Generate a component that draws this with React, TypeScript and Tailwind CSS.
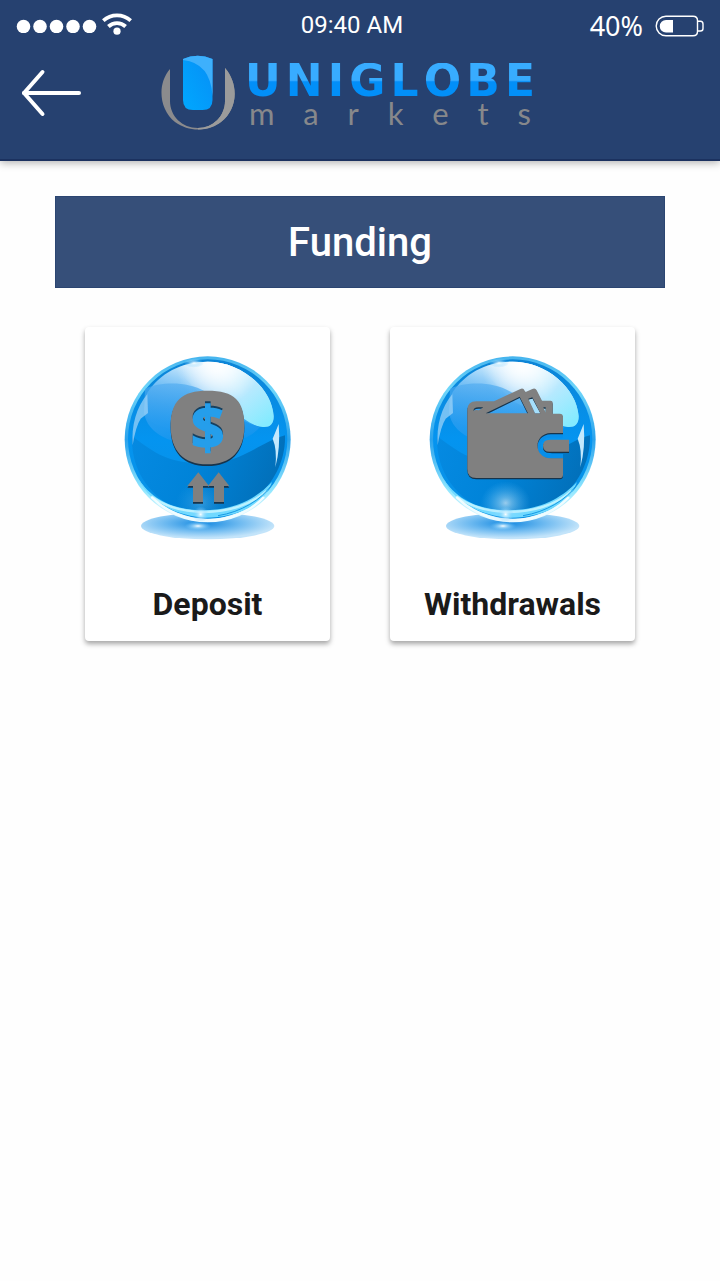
import { ReactNode, useId } from 'react'
import clsx from 'clsx'

interface FundingOption {
  href: string
  label: string
  icon: ReactNode
}

function StatusBar() {
  return (
    <div className="grid grid-cols-[1fr_auto_1fr] items-center h-[52px] px-4 text-white">
      <div className="flex items-center gap-1">
        <svg viewBox="0 0 82 14" className="w-[82px] h-[14px]" fill="#fff" aria-hidden="true">
          {[7.5, 24, 40.5, 57, 73.5].map((cx) => (
            <circle key={cx} cx={cx} cy="7.500" r="6.8" />
          ))}
        </svg>
        <svg viewBox="0 0 30 22" className="w-[30px] h-[22px] mb-1" fill="none" stroke="#fff" strokeWidth="3.8" aria-hidden="true">
          <path d="M1.3 7.6A20.5 20.5 0 0 1 28.7 7.6" />
          <path d="M6.4 13.5A12.5 12.5 0 0 1 23.6 13.5" />
          <circle cx="15" cy="18.2" r="3.6" fill="#fff" stroke="none" />
        </svg>
      </div>
      <span className="pr-4 pb-[2px] text-[24px] leading-8 font-['Roboto',sans-serif]">09:40 AM</span>
      <div className="flex items-center justify-end gap-3">
        <span className="text-[27px] leading-8 font-['Noto_Sans',sans-serif]">40%</span>
        <svg viewBox="0 0 49 22" className="w-[49px] h-[22px]" fill="none" stroke="#fff" strokeWidth="1.4" aria-hidden="true">
          <path d="M11 1.2H38Q42.500 1.2 42.500 5.500V16.500Q42.500 20.800 38 20.800H11A9.800 9.800 0 0 1 11 1.200Z" />
          <path d="M42.500 6.200H45.500Q48 6.200 48 9V13.500Q48 16 45.500 16H42.500" />
          <path d="M18 5V17.500H11A6.250 6.250 0 0 1 11 5Z" fill="#fff" stroke="none" />
        </svg>
      </div>
    </div>
  )
}

// Sets a word with its letters spread over the full width
function SpreadWord({ word, className }: { word: string; className: string }) {
  return (
    <span className={clsx('flex justify-between', className)}>
      {word.split('').map((letter, i) => (
        <span key={i}>{letter}</span>
      ))}
    </span>
  )
}

function Logo() {
  return (
    <div className="flex items-end gap-2">
      <svg viewBox="0 0 76 76" className="w-[76px] h-[76px]" aria-hidden="true">
        <defs>
          <linearGradient id="logo-blue" x1="1" y1="0" x2="0" y2="1">
            <stop offset="0" stopColor="#078ef5" />
            <stop offset="1" stopColor="#00a8ff" />
          </linearGradient>
        </defs>
        <path d="M9 14C-4 29-2 54 14 67C28 77 46 77 60 67C77 54 78 29 64 13V46C64 61 52 73 37 73C21 73 9 61 9 46Z" fill="#8b8b8d" />
        <path d="M64 13V46C64 61 52 73 37 73V74.500C47 74.500 55 71 60 67C77 54 78 29 64 13Z" fill="#9b9b9b" />
        <path d="M22 4Q36.500 -2.500 51.500 4V45Q51.500 55 41.500 55H32Q22 55 22 45Z" fill="url(#logo-blue)" />
        <path d="M22 4Q36.500 -2.500 51.500 4V41Q49.500 8 22 5Z" fill="#3eb0fc" />
      </svg>
      <div className="flex flex-col w-[290px] pb-1">
        <SpreadWord
          word="UNIGLOBE"
          className="bg-linear-to-b from-[#38acff] from-48% to-[#028ff8] to-52% bg-clip-text text-transparent text-[44px] leading-9 font-bold font-['DejaVu_Sans',sans-serif]"
        />
        <SpreadWord
          word="markets"
          className="px-1 text-[#87888b] text-[31px] leading-7 font-['Lato',sans-serif]"
        />
      </div>
    </div>
  )
}

const SHINE_SHAPE =
  'M217 236C255 176 320 141 399 141C500 141 592 220 597 305C597 330 585 338 565 337C530 332 505 318 480 300C440 330 360 350 300 345C250 335 215 320 208 295C210 275 212 256 217 236Z'

// Glossy blue ball with its reflection; the pictogram goes in as children
function GlassSphere({ glow, children }: { glow: number; children: ReactNode }) {
  const id = useId()
  const ref = (name: string) => `url(#${id}${name})`

  return (
    <svg viewBox="130 115 540 570" className="w-[180px] h-[190px]" aria-hidden="true">
      <defs>
        <radialGradient id={`${id}floor`} cx="0.46" cy="0.4" r="0.55">
          <stop offset="0" stopColor="#1589e0" />
          <stop offset="0.5" stopColor="#6cb9f0" />
          <stop offset="1" stopColor="#c3e4fa" />
        </radialGradient>
        <linearGradient id={`${id}rim`} x1="0" y1="0" x2="0" y2="1">
          <stop offset="0" stopColor="#45b4ee" />
          <stop offset="0.2" stopColor="#6fd6fa" />
          <stop offset="0.5" stopColor="#2aa2ec" />
          <stop offset="0.8" stopColor="#8ee6ff" />
          <stop offset="1" stopColor="#f2fdff" />
        </linearGradient>
        <linearGradient id={`${id}body`} x1="0" y1="0" x2="0" y2="1">
          <stop offset="0" stopColor="#0c84d6" />
          <stop offset="0.5" stopColor="#0494f0" />
          <stop offset="1" stopColor="#0a90e2" />
        </linearGradient>
        <linearGradient id={`${id}lower`} x1="0" y1="0" x2="1" y2="0.2">
          <stop offset="0" stopColor="#058ae2" />
          <stop offset="0.5" stopColor="#0083d8" />
          <stop offset="1" stopColor="#0270ba" />
        </linearGradient>
        <linearGradient id={`${id}shine`} gradientUnits="userSpaceOnUse" x1="390" y1="140" x2="330" y2="345">
          <stop offset="0" stopColor="#eaf8ff" />
          <stop offset="0.35" stopColor="#93cef8" />
          <stop offset="0.75" stopColor="#41a6ef" />
          <stop offset="1" stopColor="#0f95ee" />
        </linearGradient>
        <linearGradient id={`${id}cyan`} gradientUnits="userSpaceOnUse" x1="430" y1="150" x2="570" y2="330">
          <stop offset="0" stopColor="#f6fcff" />
          <stop offset="0.5" stopColor="#b9e9fe" />
          <stop offset="1" stopColor="#84ebff" />
        </linearGradient>
        <radialGradient id={`${id}top`} gradientUnits="userSpaceOnUse" cx="430" cy="150" r="125">
          <stop offset="0" stopColor="#fff" stopOpacity="0.95" />
          <stop offset="1" stopColor="#fff" stopOpacity="0" />
        </radialGradient>
        <linearGradient id={`${id}sweep`} gradientUnits="userSpaceOnUse" x1="340" y1="240" x2="490" y2="200">
          <stop offset="0" stopColor="#fff" stopOpacity="0" />
          <stop offset="1" stopColor="#fff" />
        </linearGradient>
        <mask id={`${id}mask`}>
          <rect x="130" y="115" width="540" height="570" fill={ref('sweep')} />
        </mask>
        <linearGradient id={`${id}haze`} x1="0.4" y1="0" x2="0.6" y2="1">
          <stop offset="0" stopColor="#4daaf0" stopOpacity="0.65" />
          <stop offset="0.6" stopColor="#2a9df0" stopOpacity="0.8" />
          <stop offset="1" stopColor="#0c93ee" />
        </linearGradient>
        <radialGradient id={`${id}glow`}>
          <stop offset="0" stopColor="#fff" />
          <stop offset="0.25" stopColor="#d3f1ff" stopOpacity="0.7" />
          <stop offset="1" stopColor="#6ec8ff" stopOpacity="0" />
        </radialGradient>
      </defs>
      <ellipse cx="399" cy="634" rx="200" ry="40" fill={ref('floor')} />
      <ellipse cx="370" cy="634" rx="40" ry="14" fill={ref('glow')} />
      <circle cx="399" cy="374" r="249" fill={ref('rim')} />
      <circle cx="399" cy="373" r="239" fill={ref('body')} />
      {/* dark lower half */}
      <path d="M172 365C230 405 265 445 390 447C500 447 560 380 631 362C635 480 540 598 400 600C260 598 167 490 172 365Z" fill={ref('lower')} />
      {/* top highlight, cyan towards the right edge */}
      <path d={SHINE_SHAPE} fill={ref('shine')} />
      <path d="M300 160Q345 141 399 141C500 141 592 220 597 305C597 330 585 338 565 337C530 332 505 318 480 300L400 260Z" fill={ref('cyan')} mask={ref('mask')} />
      <path d={SHINE_SHAPE} fill={ref('top')} />
      <path d="M211 222C260 200 340 200 390 230C450 260 500 320 555 337C530 370 470 392 390 392C290 390 220 360 208 295Z" fill={ref('haze')} />
      {/* side glints */}
      <path d="M218 238L220 295L198 312Q183 335 174 392Q168 300 218 238Z" fill="#a4d5f8" opacity="0.7" />
      <path d="M612 328L594 372Q608 405 602 458Q618 400 612 328Z" fill="#c3e8fd" />
      {/* bright band along the bottom */}
      <path d="M192 494C240 565 310 587 390 587C490 585 550 545 592 502C570 570 490 608 392 609C300 604 220 558 192 494Z" fill="#6fd9ff" />
      <path d="M230 545C285 585 340 592 390 592C460 592 530 570 575 529" fill="none" stroke="#bdf2ff" strokeWidth="7" />
      <path d="M430 603C500 592 560 555 592 510" fill="none" stroke="#1599e4" strokeWidth="3" />
      <path d="M232 549C280 596 335 616 399 617C465 616 520 596 566 549" fill="none" stroke="#f0fcff" strokeWidth="7" strokeLinecap="round" />
      <ellipse cx="378" cy="565" rx="75" ry="65" fill={ref('glow')} opacity={glow} />
      <circle cx="378" cy="599" r="24" fill={ref('glow')} />
      <ellipse cx="358" cy="145" rx="30" ry="14" fill={ref('glow')} />
      {children}
    </svg>
  )
}

const DEPOSIT_SHAPE =
  'M398 228C480 228 509 258 509 334C509 408 470 449 398 449C326 449 288 408 288 334C288 258 322 228 398 228Z M371 473L403 514H385V562H355V514H338Z M432 473L464 514H448V562H418V514H400Z'

function DepositIcon() {
  return (
    <GlassSphere glow={0.2}>
      <path d={DEPOSIT_SHAPE} fill="#17344c" transform="translate(0 5)" />
      <path d={DEPOSIT_SHAPE} fill="#808080" />
      <g className="text-[176px] font-bold font-['Noto_Sans',sans-serif]" textAnchor="middle" strokeWidth="5">
        <text x="399" y="398" fill="#17405f" stroke="#17405f">$</text>
        <text x="399" y="402" fill="#259eeb" stroke="#259eeb">$</text>
      </g>
    </GlassSphere>
  )
}

const WALLET_SHAPE =
  'M263 286Q263 260 290 260H343L422 223Q431 219 435 228L438 232L458 223Q467 219 471 227L487 258H513Q519 258 519 264V297H540Q550 297 550 307V355H514C460 356 460 430 514 431H550V480Q550 490 540 490H290Q263 490 263 463Z M568 375H510Q490 375 490 393Q490 411 510 411H568Z M318 296L420 246L445 296Z M446 252L458 248L482 296H466Z M281 288Q283 278 296 278H311L298 287Q288 284 281 288Z M491 278H498V294Z'

function WithdrawalsIcon() {
  return (
    <GlassSphere glow={0.6}>
      <path d="M550 355H514C460 356 460 430 514 431H550V418H512Q484 415 484 393Q484 371 512 369H550Z" fill="#078eea" />
      <path d={WALLET_SHAPE} fill="#17344c" fillRule="evenodd" transform="translate(0 4)" />
      <path d="M446 256L458 252L482 296H466Z" fill="#a5dffc" />
      <path d={WALLET_SHAPE} fill="#808080" fillRule="evenodd" />
    </GlassSphere>
  )
}

const options: FundingOption[] = [
  { href: '#deposit', label: 'Deposit', icon: <DepositIcon /> },
  { href: '#withdrawals', label: 'Withdrawals', icon: <WithdrawalsIcon /> },
]

export default function App() {
  return (
    <div className="min-h-screen bg-[#fefefe] font-['Roboto',sans-serif]">
      <header className="bg-[#264170] border-b-2 border-[#1b315f] pb-7 shadow-[0_2px_8px_rgba(0,0,0,0.3)]">
        <StatusBar />
        <div className="grid grid-cols-[62px_1fr_86px] items-center px-5 mt-[3px]">
          <button type="button" aria-label="Back" className="cursor-pointer">
            <svg viewBox="0 0 62 48" className="w-[62px] h-12" fill="none" stroke="#fff" strokeWidth="4" strokeLinecap="round" strokeLinejoin="round" aria-hidden="true">
              <path d="M22.500 3L4 24L22.500 45" />
              <path d="M4 24H59" />
            </svg>
          </button>
          <div className="flex justify-center">
            <Logo />
          </div>
        </div>
      </header>

      <main className="px-[55px] pt-[35px]">
        <h1 className="flex items-center justify-center h-[92px] pt-[2px] bg-[#364f79] border border-[#2b4571] text-white text-[40px] font-medium">
          Funding
        </h1>
        <div className="grid grid-cols-2 gap-[60px] px-[30px] mt-[39px]">
          {options.map((option) => (
            <a
              key={option.href}
              href={option.href}
              className="flex flex-col items-center pt-[26px] pb-[17px] rounded bg-white shadow-[0_3px_5px_rgba(0,0,0,0.35)]"
            >
              {option.icon}
              <span className="mt-[41px] text-[32px] leading-10 font-bold text-[#1a1a1a]">{option.label}</span>
            </a>
          ))}
        </div>
      </main>
    </div>
  )
}
